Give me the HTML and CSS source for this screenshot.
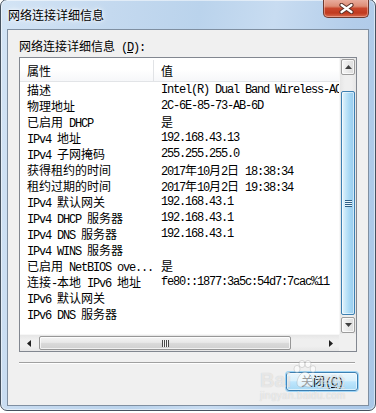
FILE: index.html
```html
<!DOCTYPE html>
<html lang="zh-CN">
<head>
  <meta charset="UTF-8">
  <meta name="viewport" content="width=device-width,initial-scale=1.0">
  <title>网络连接详细信息</title>
  <link rel="stylesheet" href="styles.css">
</head>
<body>

  <div class="window">
    <div class="titlebar">
      <span class="title">网络连接详细信息</span>
      <button class="close" aria-label="关闭">
        <svg width="15" height="11" viewBox="0 0 15 11">
          <path d="M2.5 2L12.5 9M12.5 2L2.5 9" stroke="#5a3028" stroke-width="4.2" stroke-linecap="round"/>
          <path d="M2.5 2L12.5 9M12.5 2L2.5 9" stroke="#fff" stroke-width="2.2" stroke-linecap="round"/>
        </svg>
      </button>
    </div>

    <div class="client">
      <p class="label"><span class="h">网络连接详细信息</span> (<u>D</u>):</p>

      <div class="listbox">
        <div class="view">
          <div class="head">
            <div class="k"><span class="h">属性</span></div>
            <div class="v"><span class="h">值</span></div>
          </div>
          <div class="row"><div class="k"><span class="h">描述</span></div><div class="v">Intel(R) Dual Band Wireless-AC 3160</div></div>
          <div class="row"><div class="k"><span class="h">物理地址</span></div><div class="v">2C-6E-85-73-AB-6D</div></div>
          <div class="row"><div class="k"><span class="h">已启用</span> DHCP</div><div class="v"><span class="h">是</span></div></div>
          <div class="row"><div class="k">IPv4 <span class="h">地址</span></div><div class="v">192.168.43.13</div></div>
          <div class="row"><div class="k">IPv4 <span class="h">子网掩码</span></div><div class="v">255.255.255.0</div></div>
          <div class="row"><div class="k"><span class="h">获得租约的时间</span></div><div class="v">2017<span class="h">年</span>10<span class="h">月</span>2<span class="h">日</span> 18:38:34</div></div>
          <div class="row"><div class="k"><span class="h">租约过期的时间</span></div><div class="v">2017<span class="h">年</span>10<span class="h">月</span>2<span class="h">日</span> 19:38:34</div></div>
          <div class="row"><div class="k">IPv4 <span class="h">默认网关</span></div><div class="v">192.168.43.1</div></div>
          <div class="row"><div class="k">IPv4 DHCP <span class="h">服务器</span></div><div class="v">192.168.43.1</div></div>
          <div class="row"><div class="k">IPv4 DNS <span class="h">服务器</span></div><div class="v">192.168.43.1</div></div>
          <div class="row"><div class="k">IPv4 WINS <span class="h">服务器</span></div><div class="v"></div></div>
          <div class="row"><div class="k"><span class="h">已启用</span> NetBIOS ove...</div><div class="v"><span class="h">是</span></div></div>
          <div class="row"><div class="k"><span class="h">连接</span>-<span class="h">本地</span> IPv6 <span class="h">地址</span></div><div class="v">fe80::1877:3a5c:54d7:7cac%11</div></div>
          <div class="row"><div class="k">IPv6 <span class="h">默认网关</span></div><div class="v"></div></div>
          <div class="row"><div class="k">IPv6 DNS <span class="h">服务器</span></div><div class="v"></div></div>
        </div>

        <!-- vertical scrollbar -->
        <div class="vscroll">
          <div class="sbtn">
            <svg width="7" height="4" viewBox="0 0 7 4"><polygon points="0,4 3.5,0 7,4" fill="#404040"/></svg>
          </div>
          <div class="vtrack"><div class="vthumb"><span class="grip"></span></div></div>
          <div class="sbtn">
            <svg width="7" height="4" viewBox="0 0 7 4"><polygon points="0,0 7,0 3.5,4" fill="#404040"/></svg>
          </div>
        </div>

        <!-- horizontal scrollbar -->
        <div class="hscroll">
          <div class="hbtn">
            <svg width="4" height="7" viewBox="0 0 4 7"><polygon points="4,0 4,7 0,3.5" fill="#202020"/></svg>
          </div>
          <div class="htrack"><div class="hthumb"><span class="grip-h"></span></div></div>
          <div class="hbtn">
            <svg width="4" height="7" viewBox="0 0 4 7"><polygon points="0,0 0,7 4,3.5" fill="#202020"/></svg>
          </div>
        </div>
        <div class="corner"></div>
      </div>

      <div class="sep"></div>

      <div class="actions">
        <button class="btn"><span class="h">关闭</span>(<u>C</u>)</button>
      </div>
    </div>

    <!-- baidu watermark -->
    <div class="watermark">
      <div class="wm-top">
        <span class="wm-bai">Bai</span>
        <svg width="24" height="30" viewBox="0 0 24 30">
          <ellipse cx="5" cy="9" rx="3" ry="3.6"/>
          <ellipse cx="10" cy="4" rx="3" ry="3.6"/>
          <ellipse cx="16" cy="4" rx="3" ry="3.6"/>
          <ellipse cx="21" cy="9" rx="2.8" ry="3.4"/>
          <path d="M13 12c-4 0-8 6-8 11 0 4 4 5 8 3 4 2 8 1 8-3 0-5-4-11-8-11z"/>
        </svg>
        <span class="wm-jy">经验</span>
      </div>
      <div class="wm-url">jingyan.baidu.com</div>
    </div>
  </div>

</body>
</html>
```

FILE: styles.css
```css
:root{
  --frame-1:#d3e4f5;
  --frame-2:#bad3ec;
  --frame-3:#a9c7e7;
  --client:#f0f0f0;
  --list-br:#828790;
}
*{box-sizing:border-box;margin:0;padding:0}
body{
  background:#fff;
  font-family:"Noto Sans CJK SC",sans-serif;
  font-size:12px;
  color:#000;
}
/* window frame */
.window{
  position:relative;
  width:376px;
  height:412px;
  margin-top:-1px;
  display:flex;
  flex-direction:column;
  padding:0 6px 4px;
  border:1px solid #46525f;
  border-radius:7px;
  background:linear-gradient(100deg,var(--frame-1) 0%,#c4d9ef 25%,var(--frame-2) 45%,#c8dcf1 62%,#b3cdea 80%,var(--frame-3) 100%);
  box-shadow:inset 0 0 0 1px rgba(255,255,255,.5);
  overflow:hidden;
}
.titlebar{
  height:29px;
  flex:none;
  display:flex;
  align-items:flex-start;
}
.title{
  line-height:29px;
  padding-left:1px;
  text-shadow:0 0 6px #fff,0 0 3px #fff;
}
.close{
  margin-left:auto;
  margin-top:-1px;
  width:46px;
  height:19px;
  border:1px solid #6e3a30;
  border-top:0;
  border-radius:0 0 5px 5px;
  background:linear-gradient(#eab1a3 0%,#de8d76 40%,#c9472d 52%,#c13a1f 78%,#d86c50 100%);
  box-shadow:inset 0 0 0 1px rgba(255,210,200,.45);
  display:flex;
  justify-content:center;
  align-items:center;
}
/* client area */
.client{
  flex:1;
  background:var(--client);
  border:1px solid #7f8fa1;
  padding:8px 11px 0 11px;
  display:flex;
  flex-direction:column;
  font-family:"Liberation Mono","Noto Sans CJK SC",monospace;
  font-size:12px;
  letter-spacing:-1.2px;
}
.h{
  font-family:"Noto Sans CJK SC",sans-serif;
  font-size:12px;
  letter-spacing:0;
}
.label{line-height:16px;height:16px}
/* list box */
.listbox{
  margin-top:3px;
  height:295px;
  flex:none;
  border:1px solid var(--list-br);
  background:#fff;
  display:grid;
  grid-template-columns:1fr 17px;
  grid-template-rows:1fr 17px;
}
.view{overflow:hidden}
.head,.row{
  display:grid;
  grid-template-columns:134px 1fr;
  white-space:nowrap;
}
.head{
  height:24px;
  padding-top:2px;
  border-bottom:1px solid #e2e4e7;
  background:linear-gradient(#fff 0%,#fff 50%,#f6f7f9 100%);
  align-items:center;
}
.head .k{border-right:1px solid #e1e3e6;height:100%;display:flex;align-items:center}
.row{height:16px;line-height:16px}
.k,.v{overflow:hidden;padding-left:7px}
/* vertical scrollbar */
.vscroll{
  padding:1px;
  display:flex;
  flex-direction:column;
  background:linear-gradient(to right,#e6e6e6,#efefef 30%,#efefef 70%,#e6e6e6);
  border-left:1px solid #f7f7f7;
}
.sbtn{
  height:16px;
  flex:none;
  border:1px solid #9c9c9c;
  border-radius:2px;
  background:linear-gradient(to right,#f7f7f7,#e9e9e9 50%,#dcdcdc);
  box-shadow:inset 0 0 0 1px rgba(255,255,255,.7);
  display:flex;
  justify-content:center;
  align-items:center;
}
.vtrack{
  flex:1;
  display:flex;
  flex-direction:column;
  padding:16px 0 2px;
}
.vthumb{
  flex:1;
  border:1px solid #3c7fb1;
  border-radius:2px;
  background:linear-gradient(to right,#e4f4fc,#bfe4f8 35%,#a9d9f5 60%,#97ccee);
  box-shadow:inset 0 0 0 1px rgba(255,255,255,.55);
  display:flex;
  justify-content:center;
  align-items:center;
}
.grip{
  width:7px;
  height:7px;
  background:repeating-linear-gradient(#2f5f85 0 1px,#e8f6fd 1px 2px);
}
/* horizontal scrollbar */
.hscroll{
  display:flex;
  padding:1px 0;
  background:linear-gradient(#e6e6e6,#efefef 30%,#efefef 70%,#e6e6e6);
  border-top:1px solid #f7f7f7;
}
.hbtn{
  width:17px;
  flex:none;
  display:flex;
  justify-content:center;
  align-items:center;
}
.htrack{flex:1;padding-left:2px}
.hthumb{
  width:252px;
  height:100%;
  border:1px solid #979797;
  border-radius:2px;
  background:linear-gradient(#f4f4f4,#e8e8e8 45%,#d9d9d9 55%,#d0d0d0);
  box-shadow:inset 0 0 0 1px rgba(255,255,255,.7);
  display:flex;
  justify-content:center;
  align-items:center;
}
.grip-h{
  width:7px;
  height:7px;
  background:repeating-linear-gradient(to right,#4a4a4a 0 1px,#f4f4f4 1px 2px);
}
.corner{background:var(--client)}
/* separator + buttons */
.sep{
  margin:10px 2px 0 0;
  border-top:1px solid #a0a0a0;
  border-bottom:1px solid #fff;
}
.actions{
  margin-top:8px;
  display:flex;
  justify-content:flex-end;
  margin-right:-1px;
}
.btn{
  width:72px;
  height:19px;
  border:1px solid #3c7fb1;
  border-radius:3px;
  background:linear-gradient(#eaf6fd 0%,#d9f0fc 45%,#bee6fd 52%,#a7d9f5 100%);
  box-shadow:0 0 0 1px #9fd5f6,inset 0 0 0 1px rgba(255,255,255,.6);
  font:inherit;
  line-height:16px;
  color:#000;
  letter-spacing:-1.2px;
}
/* watermark over the bottom corner */
.watermark{
  position:absolute;
  left:259px;
  top:356px;
  pointer-events:none;
  color:rgba(255,255,255,.6);
  text-shadow:0 0 1px rgba(0,0,0,.2);
}
.wm-top{display:flex;align-items:flex-end;height:34px}
.wm-bai{font:bold 20px/20px "Liberation Sans",sans-serif}
.watermark svg{fill:rgba(255,255,255,.6);stroke:rgba(120,120,120,.3);stroke-width:.8;margin:0 1px}
.wm-jy{font:bold 14px/18px "Noto Sans CJK SC",sans-serif}
.wm-url{font:10px/12px "Liberation Sans",sans-serif;letter-spacing:.3px}
```
